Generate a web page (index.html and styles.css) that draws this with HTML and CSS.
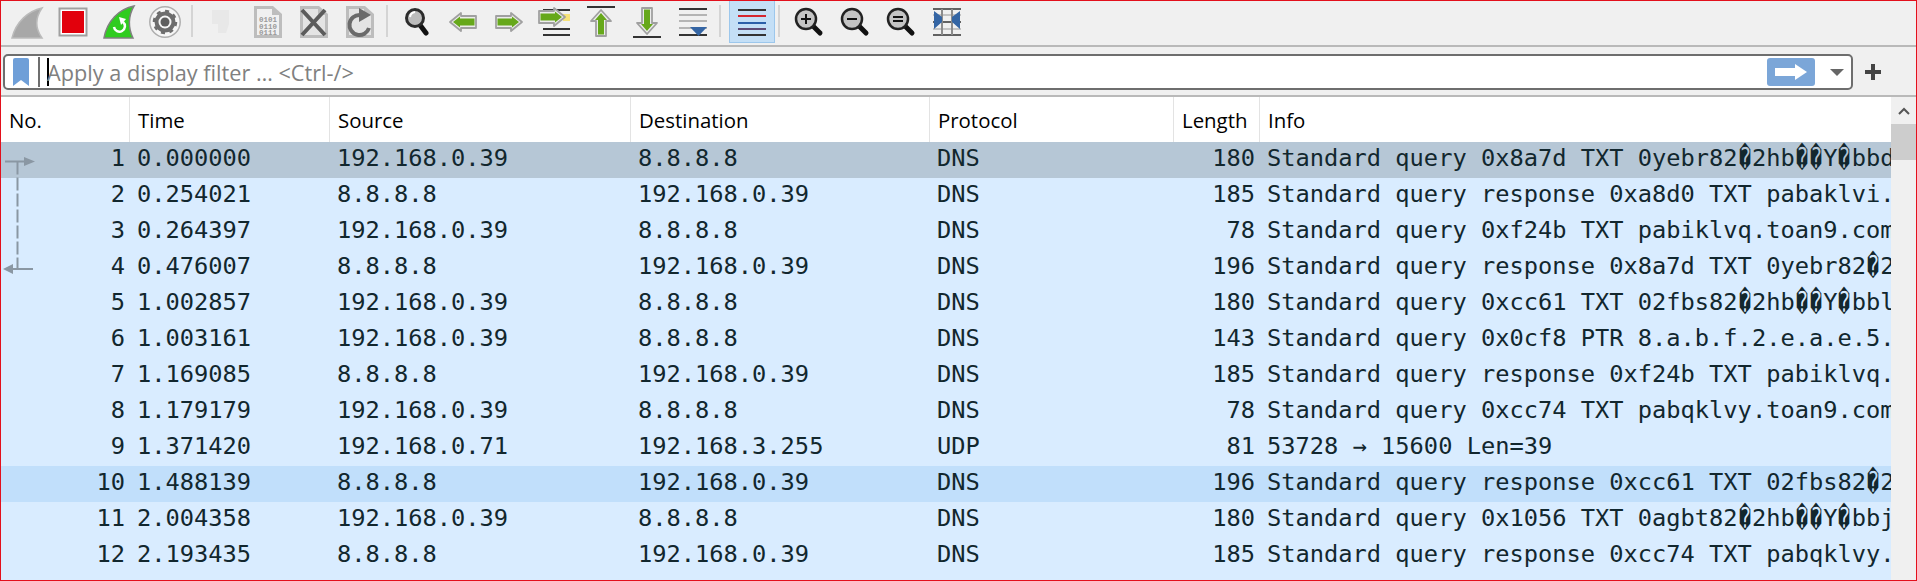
FILE: index.html
```html
<!DOCTYPE html>
<html lang="en">
<head>
    <meta charset="UTF-8">
    <title>Wireshark</title>
    <link rel="stylesheet" href="styles.css">
</head>
<body>
<div class="window">
    <div class="toolbar">
        <div class="tool"><svg width="34" height="36" viewBox="0 0 34 36"><path d="M2 34C6 18 18 7 32 4C25 14 25 24 32 34Z" fill="#a8a8a8" stroke="#bbb" stroke-width="1.5"/></svg></div>
        <div class="tool"><svg width="30" height="30" viewBox="0 0 30 30"><rect x="1.5" y="1.5" width="27" height="27" fill="#fff" stroke="#a0a0a0" stroke-width="2"/><rect x="4" y="4" width="22" height="22" fill="#e2000c"/></svg></div>
        <div class="tool"><svg width="34" height="36" viewBox="0 0 34 36"><path d="M2 34C5 17 17 5 32 2C26 12 26 24 31 34Z" fill="#2fcc1f" stroke="#808080" stroke-width="1.5"/><path d="M12 23A5.5 5.5 0 1 0 21 18" fill="none" stroke="#fff" stroke-width="2.5"/><path d="M17 13L24 15L19 21Z" fill="#fff"/></svg></div>
        <div class="tool"><svg width="34" height="34" viewBox="0 0 34 34"><circle cx="17" cy="17" r="15.2" fill="#f6f6f6" stroke="#aeaeae" stroke-width="1.5"/><circle cx="17" cy="17" r="8.5" fill="none" stroke="#6d6d6d" stroke-width="4"/><circle cx="17" cy="17" r="11" fill="none" stroke="#6d6d6d" stroke-width="2.5" stroke-dasharray="4 4.6"/><circle cx="17" cy="17" r="4.5" fill="#5e5e5e"/></svg></div>
        <div class="sep"></div>
        <div class="tool"><svg width="20" height="26" viewBox="0 0 20 26"><path d="M0 1H17V15L14 24H6V15H0Z" fill="#e8e8e8"/></svg></div>
        <div class="tool"><svg width="30" height="34" viewBox="0 0 30 34"><path d="M1 1H20L29 9V33H1Z" fill="#bdbdbd"/><path d="M4 4H19V10H26V30H4Z" fill="#f0f0f0"/><text x="15" y="17" class="bits">0101</text><text x="15" y="23.5" class="bits">0110</text><text x="15" y="30" class="bits">0111</text></svg></div>
        <div class="tool"><svg width="30" height="34" viewBox="0 0 30 34"><path d="M1 1H20L29 9V33H1Z" fill="#bdbdbd"/><path d="M4 4H19V10H26V30H4Z" fill="#e4e4e4"/><path d="M3 5L26 30M26 5L3 30" stroke="#5c5c5c" stroke-width="4"/></svg></div>
        <div class="tool"><svg width="30" height="34" viewBox="0 0 30 34"><path d="M1 1H20L29 9V33H1Z" fill="#bdbdbd"/><path d="M4 4H19V10H26V30H4Z" fill="#e4e4e4"/><path d="M24 23A10 10 0 1 1 15 10" fill="none" stroke="#6a6a6a" stroke-width="4"/><path d="M14 3L26 10L14 17Z" fill="#6a6a6a"/></svg></div>
        <div class="sep"></div>
        <div class="tool"><svg width="30" height="32" viewBox="0 0 30 32"><path d="M18 19L24 27" stroke="#111" stroke-width="5" stroke-linecap="round"/><circle cx="13" cy="12" r="8.5" fill="#bcbcbc" stroke="#2c2c2c" stroke-width="3"/><path d="M8 11A6 6 0 0 1 13 6" fill="none" stroke="#fff" stroke-width="2"/></svg></div>
        <div class="tool"><svg width="28" height="20" viewBox="0 0 28 20"><path d="M1 10L12 1V4H27V16H12V19Z" fill="#ececec" stroke="#a0a0a0" stroke-width="1.8" stroke-linejoin="round"/><path d="M4 10L11 4.500V6.500H25.500V13.500H11V15.500Z" fill="#66a81a"/></svg></div>
        <div class="tool"><svg width="28" height="20" viewBox="0 0 28 20"><path d="M27 10L16 1V4H1V16H16V19Z" fill="#ececec" stroke="#a0a0a0" stroke-width="1.8" stroke-linejoin="round"/><path d="M24 10L17 4.500V6.500H2.500V13.500H17V15.500Z" fill="#66a81a"/></svg></div>
        <div class="tool"><svg width="34" height="30" viewBox="0 0 34 30"><path d="M5 3H32M5 22H32M5 28H32" stroke="#333" stroke-width="2"/><rect x="25" y="7" width="7" height="7" fill="#f6e27a"/><path d="M27 10L16 1V4H1V16H16V19Z" fill="#ececec" stroke="#a0a0a0" stroke-width="1.8" stroke-linejoin="round"/><path d="M24 10L17 4.500V6.500H2.500V13.500H17V15.500Z" fill="#66a81a"/></svg></div>
        <div class="tool"><svg width="30" height="32" viewBox="0 0 30 32"><path d="M1 1H29" stroke="#333" stroke-width="2"/><path d="M15 4L25 15H20V30H10V15H5Z" fill="#ececec" stroke="#a0a0a0" stroke-width="1.8" stroke-linejoin="round"/><path d="M15 7L21 14H18V28.500H12V14H9Z" fill="#66a81a"/></svg></div>
        <div class="tool"><svg width="30" height="32" viewBox="0 0 30 32"><path d="M1 31H29" stroke="#333" stroke-width="2"/><path d="M15 28L25 17H20V2H10V17H5Z" fill="#ececec" stroke="#a0a0a0" stroke-width="1.8" stroke-linejoin="round"/><path d="M15 25L21 18H18V3.500H12V18H9Z" fill="#66a81a"/></svg></div>
        <div class="tool"><svg width="30" height="30" viewBox="0 0 30 30"><path d="M1 2H29M1 28H29" stroke="#333" stroke-width="2"/><path d="M1 8H29M1 14H29M1 21H29" stroke="#b4b4b4" stroke-width="2"/><path d="M12 20H29L20.500 29Z" fill="#3465a4"/></svg></div>
        <div class="sep sep-wide"></div>
        <div class="tool tool-on"><svg width="30" height="28" viewBox="0 0 30 28"><path d="M1 2H29M1 27H29" stroke="#333" stroke-width="2"/><path d="M1 8H29" stroke="#d5262f" stroke-width="2"/><path d="M1 15H29" stroke="#2c5fa8" stroke-width="2"/><path d="M1 21H29" stroke="#5e4a74" stroke-width="2"/></svg></div>
        <div class="sep"></div>
        <div class="tool"><svg width="30" height="30" viewBox="0 0 30 30"><path d="M18 18L26 26" stroke="#111" stroke-width="5" stroke-linecap="round"/><circle cx="12" cy="12" r="10" fill="#c4c4c4" stroke="#222" stroke-width="2.5"/><path d="M7 12H17M12 7V17" stroke="#111" stroke-width="2"/></svg></div>
        <div class="tool"><svg width="30" height="30" viewBox="0 0 30 30"><path d="M18 18L26 26" stroke="#111" stroke-width="5" stroke-linecap="round"/><circle cx="12" cy="12" r="10" fill="#c4c4c4" stroke="#222" stroke-width="2.5"/><path d="M7 12H17" stroke="#111" stroke-width="2"/></svg></div>
        <div class="tool"><svg width="30" height="30" viewBox="0 0 30 30"><path d="M18 18L26 26" stroke="#111" stroke-width="5" stroke-linecap="round"/><circle cx="12" cy="12" r="10" fill="#c4c4c4" stroke="#222" stroke-width="2.5"/><path d="M7 10H17M7 14H17" stroke="#111" stroke-width="2"/></svg></div>
        <div class="tool"><svg width="30" height="30" viewBox="0 0 30 30"><path d="M1 2H29M1 15H29M1 28H29" stroke="#333" stroke-width="1.500"/><path d="M1 8H29M1 22H29" stroke="#b4b4b4" stroke-width="1.500"/><path d="M10 2V28M20 2V28" stroke="#8c8c8c" stroke-width="2"/><path d="M2 4L10 10V15L2 22Z M28 4L20 10V15L28 22Z" fill="#3465a4"/></svg></div>
    </div>

    <div class="filter-row">
        <div class="filter-box">
            <svg class="bookmark" width="16" height="28" viewBox="0 0 16 28"><path d="M0 2Q0 0 2 0H14Q16 0 16 2V28L8 22L0 28Z" fill="#6f9fd8"/></svg>
            <div class="filter-div"></div>
            <div class="caret"></div>
            <div class="filter-text">Apply a display filter … &lt;Ctrl-/&gt;</div>
            <div class="apply"><svg width="32" height="16" viewBox="0 0 32 16"><path d="M0 4H20V0L32 8L20 16V12H0Z" fill="#fff"/></svg></div>
            <div class="drop"></div>
        </div>
        <svg class="plus" width="16" height="16" viewBox="0 0 16 16"><path d="M6 0H10V6H16V10H10V16H6V10H0V6H6Z" fill="#444"/></svg>
    </div>

    <div class="list">
        <div class="table">
            <div class="row head">
                <div>No.</div><div>Time</div><div>Source</div><div>Destination</div><div>Protocol</div><div>Length</div><div>Info</div>
            </div>
            <div class="row packet selected"><div class="num">1</div><div>0.000000</div><div>192.168.0.39</div><div>8.8.8.8</div><div>DNS</div><div class="num">180</div><div>Standard query 0x8a7d TXT 0yebr82<span class="bad">�</span>2hb<span class="bad">�</span><span class="bad">�</span>Y<span class="bad">�</span>bbd</div></div>
            <div class="row packet"><div class="num">2</div><div>0.254021</div><div>8.8.8.8</div><div>192.168.0.39</div><div>DNS</div><div class="num">185</div><div>Standard query response 0xa8d0 TXT pabaklvi.</div></div>
            <div class="row packet"><div class="num">3</div><div>0.264397</div><div>192.168.0.39</div><div>8.8.8.8</div><div>DNS</div><div class="num">78</div><div>Standard query 0xf24b TXT pabiklvq.toan9.com</div></div>
            <div class="row packet"><div class="num">4</div><div>0.476007</div><div>8.8.8.8</div><div>192.168.0.39</div><div>DNS</div><div class="num">196</div><div>Standard query response 0x8a7d TXT 0yebr82<span class="bad">�</span>2</div></div>
            <div class="row packet"><div class="num">5</div><div>1.002857</div><div>192.168.0.39</div><div>8.8.8.8</div><div>DNS</div><div class="num">180</div><div>Standard query 0xcc61 TXT 02fbs82<span class="bad">�</span>2hb<span class="bad">�</span><span class="bad">�</span>Y<span class="bad">�</span>bbl</div></div>
            <div class="row packet"><div class="num">6</div><div>1.003161</div><div>192.168.0.39</div><div>8.8.8.8</div><div>DNS</div><div class="num">143</div><div>Standard query 0x0cf8 PTR 8.a.b.f.2.e.a.e.5.</div></div>
            <div class="row packet"><div class="num">7</div><div>1.169085</div><div>8.8.8.8</div><div>192.168.0.39</div><div>DNS</div><div class="num">185</div><div>Standard query response 0xf24b TXT pabiklvq.</div></div>
            <div class="row packet"><div class="num">8</div><div>1.179179</div><div>192.168.0.39</div><div>8.8.8.8</div><div>DNS</div><div class="num">78</div><div>Standard query 0xcc74 TXT pabqklvy.toan9.com</div></div>
            <div class="row packet"><div class="num">9</div><div>1.371420</div><div>192.168.0.71</div><div>192.168.3.255</div><div>UDP</div><div class="num">81</div><div>53728 → 15600 Len=39</div></div>
            <div class="row packet hover"><div class="num">10</div><div>1.488139</div><div>8.8.8.8</div><div>192.168.0.39</div><div>DNS</div><div class="num">196</div><div>Standard query response 0xcc61 TXT 02fbs82<span class="bad">�</span>2</div></div>
            <div class="row packet"><div class="num">11</div><div>2.004358</div><div>192.168.0.39</div><div>8.8.8.8</div><div>DNS</div><div class="num">180</div><div>Standard query 0x1056 TXT 0agbt82<span class="bad">�</span>2hb<span class="bad">�</span><span class="bad">�</span>Y<span class="bad">�</span>bbj</div></div>
            <div class="row packet"><div class="num">12</div><div>2.193435</div><div>8.8.8.8</div><div>192.168.0.39</div><div>DNS</div><div class="num">185</div><div>Standard query response 0xcc74 TXT pabqklvy.</div></div>
            <svg class="related" width="34" height="118" viewBox="0 0 34 118"><path d="M3 4.500H24" stroke="#8a97a3" stroke-width="2"/><path d="M22 0L33 4.500L22 9Z" fill="#8a97a3"/><path d="M15.500 4.500V112" stroke="#8a97a3" stroke-width="2" stroke-dasharray="13 3"/><path d="M10 112H31" stroke="#8a97a3" stroke-width="2"/><path d="M11 107L1 112L11 117Z" fill="#8a97a3"/></svg>
        </div>
        <div class="scrollbar">
            <div class="arrow"><svg width="12" height="8" viewBox="0 0 12 8"><path d="M1 7L6 2L11 7" fill="none" stroke="#555" stroke-width="2"/></svg></div>
            <div class="thumb"></div>
        </div>
    </div>
</div>
</body>
</html>
```

FILE: styles.css
```css
* {
    box-sizing: border-box;
}
html, body {
    margin: 0;
    height: 100%;
}
.window {
    width: 1917px;
    height: 581px;
    border: 1px solid #e3101c;
    background: #f0f0f0;
    overflow: hidden;
    display: flex;
    flex-direction: column;
    font-family: "Open Sans", "Noto Sans", sans-serif;
}

/* toolbar */
.toolbar {
    height: 46px;
    flex: none;
    display: flex;
    align-items: stretch;
    padding: 0 0 2px 3px;
    border-bottom: 2px solid #b9b9b9;
}
.tool {
    width: 46px;
    display: flex;
    align-items: center;
    justify-content: center;
}
.tool-on {
    background: #c4dff6;
    border: 1px solid #9cc7ec;
    border-top: 0;
}
.sep {
    width: 2px;
    height: 32px;
    margin: 4px 6px 0 3px;
    background: #d4d4d4;
}
.sep-wide {
    margin-right: 8px;
}
.bits {
    font-family: "Liberation Mono", monospace;
    font-size: 7.5px;
    font-weight: bold;
    fill: #9a9a9a;
    text-anchor: middle;
}

/* filter bar */
.filter-row {
    height: 50px;
    flex: none;
    display: flex;
    align-items: center;
    padding: 2px 0 0 2px;
    border-bottom: 2px solid #b9b9b9;
}
.filter-box {
    width: 1850px;
    height: 36px;
    background: #fff;
    border: 2px solid #6e6e6e;
    border-radius: 5px;
    display: flex;
    align-items: center;
    padding-left: 8px;
}
.bookmark {
    flex: none;
}
.filter-div {
    width: 2px;
    height: 30px;
    margin: 0 7px 0 9px;
    background: #6e6e6e;
}
.caret {
    width: 2px;
    height: 28px;
    margin-right: -2px;
    background: #000;
}
.filter-text {
    flex: 1;
    font-size: 21.7px;
    line-height: 32px;
    padding-top: 2px;
    color: #808080;
    white-space: nowrap;
}
.apply {
    width: 48px;
    height: 28px;
    border-radius: 3px;
    background: #7ba6d8;
    display: flex;
    align-items: center;
    justify-content: center;
}
.drop {
    width: 0;
    height: 0;
    margin: 0 7px 0 15px;
    border-left: 7px solid transparent;
    border-right: 7px solid transparent;
    border-top: 7px solid #666;
}
.plus {
    margin-left: 12px;
}

/* packet list */
.list {
    flex: 1;
    display: flex;
    min-height: 0;
    background: #fff;
}
.table {
    position: relative;
    width: 1890px;
    background: #d9ecff;
    overflow: hidden;
}
.row {
    display: grid;
    grid-template-columns: 129px 200px 301px 299px 244px 86px 1fr;
    height: 36px;
    color: #12272e;
    font-family: "DejaVu Sans Mono", monospace;
    font-size: 23.7px;
    line-height: 33px;
    white-space: nowrap;
}
.row > div {
    overflow: hidden;
    padding-left: 7px;
}
.packet > div.num {
    padding: 0 5px 0 0;
    text-align: right;
}
.head {
    height: 45px;
    background: #fff;
    color: #000;
    font-family: "Open Sans", "Noto Sans", sans-serif;
    font-size: 20.4px;
    line-height: 47px;
}
.head > div {
    padding-left: 8px;
    border-right: 1px solid #e3e3e3;
}
.head > div:last-child {
    border-right: 0;
}
.selected {
    background: #b6c7d6;
}
.hover {
    background: #c1dffb;
}
.bad {
    display: inline-block;
    width: 14.27px;
    line-height: 20px;
    transform: scale(0.85, 1.2);
}
.related {
    position: absolute;
    left: 1px;
    top: 60px;
}
.scrollbar {
    flex: 1;
    background: #f0f0f0;
}
.arrow {
    height: 27px;
    display: flex;
    align-items: center;
    justify-content: center;
}
.thumb {
    height: 36px;
    background: #cdcdcd;
}
```
